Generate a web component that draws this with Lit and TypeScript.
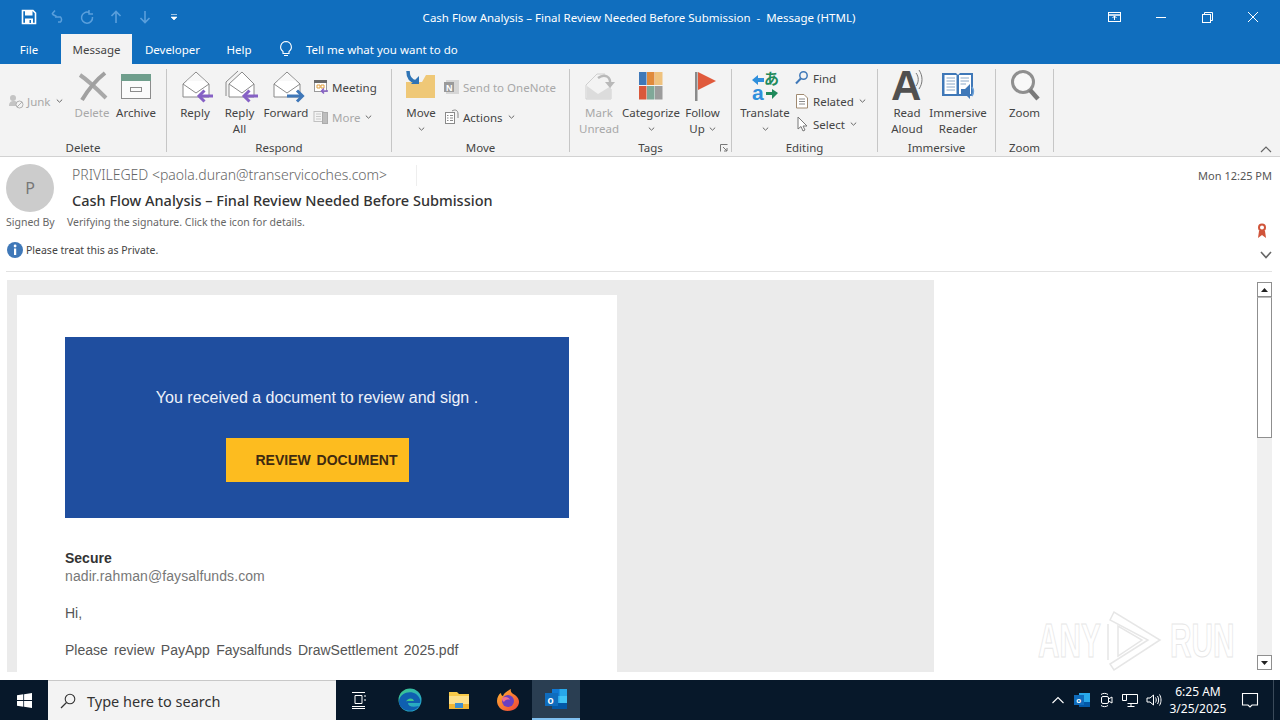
import { LitElement, html, css, svg, nothing } from "lit";
import { customElement } from "lit/decorators.js";

const big = (d: unknown) => html`<svg class="bigico" viewBox="0 0 32 32">${d}</svg>`;
const sm = (d: unknown) => html`<svg class="smico" viewBox="0 0 16 16">${d}</svg>`;
const tb = (d: unknown) => html`<svg class="tbico" viewBox="0 0 24 24">${d}</svg>`;

const chev = html`<svg class="chev" viewBox="0 0 7 4"><path d="M.8.6 3.5 3.2 6.2.6" fill="none" stroke="currentColor" stroke-width="1"/></svg>`;

const envelope = svg`<path d="M4 14 17 2 30 14V27H4Z" fill="#fff" stroke="#8a8a8a" stroke-width="1"/><path d="M4 14 17 23 30 14" fill="none" stroke="#8a8a8a"/><path d="M8 11 17 3 26 11" fill="#f8f8f8" stroke="none"/>`;

const icons = {
  del: big(svg`<path d="M4 5C13 11 22 20 30 28" stroke="#a8a8a8" stroke-width="4" fill="none"/><path d="M29 3C20 10 12 20 6 30" stroke="#a0a0a0" stroke-width="4" fill="none"/>`),
  archive: big(svg`<rect x="1.5" y="4.5" width="29" height="24" fill="#fbfbfb" stroke="#8c8c8c"/><rect x="1" y="4" width="30" height="7" fill="#6f9e8c"/><rect x="10.5" y="17.5" width="11" height="4" fill="none" stroke="#8c8c8c"/>`),
  reply: big(svg`${envelope}<path d="M34 26H20" stroke="#8661c5" stroke-width="3"/><path d="M25.500 20.500 20 26l5.500 5.500" fill="none" stroke="#8661c5" stroke-width="3"/>`),
  replyAll: big(svg`<path d="M2 26V12L14 1" fill="none" stroke="#8a8a8a"/><path d="M5 14 18 2 30 14V27H5Z" fill="#fff" stroke="#8a8a8a"/><path d="M5 14 18 23 30 14" fill="none" stroke="#8a8a8a"/><path d="M34 26H20" stroke="#8661c5" stroke-width="3"/><path d="M25.500 20.500 20 26l5.500 5.500" fill="none" stroke="#8661c5" stroke-width="3"/>`),
  forward: big(svg`${envelope}<path d="M17 26H31" stroke="#3f77b8" stroke-width="3"/><path d="M27 20.500 32.500 26 27 31.500" fill="none" stroke="#3f77b8" stroke-width="3"/>`),
  move: big(svg`<path d="M1 28V12H17L21 5H30V28Z" fill="#efc877"/><path d="M3 1C3 8 6 11 11 12" fill="none" stroke="#2f74b5" stroke-width="3.500"/><path d="M6 14H14V6Z" fill="#2f74b5"/>`),
  unread: big(svg`<path d="M3 15 14 4 22 4M3 15V29H28V19" fill="none" stroke="#cfcfcf"/><path d="M4 16 15 24 28 16V29H4Z" fill="#dcdcdc"/><path d="M15 8C22 3 28 7 27 14" fill="none" stroke="#b9b9b9" stroke-width="2.500"/><path d="M22 12H32L27 18Z" fill="#b9b9b9"/>`),
  cat: big(svg`<rect x="4" y="2" width="7.500" height="13" fill="#3f78b8"/><rect x="12" y="2" width="7.500" height="13" fill="#e08a3c"/><rect x="20" y="2" width="7.500" height="13" fill="#efc27e"/><rect x="4" y="16" width="7.500" height="13.500" fill="#d9583b"/><rect x="12" y="16" width="7.500" height="13.500" fill="#7fa898"/><rect x="20" y="16" width="7.500" height="13.500" fill="#9c9c9c"/>`),
  flag: big(svg`<rect x="8" y="2" width="2.500" height="29" fill="#8a8a8a"/><path d="M11 2 29 11 11 20Z" fill="#e05a3c"/>`),
  translate: big(svg`<path d="M12 8H6V5L0 10 6 15V12H12Z" fill="#2f8fdc" transform="translate(3 0)"/><text class="gl-a" x="15" y="14">あ</text><text class="gl-b" x="3" y="30">a</text><path d="M18 20V23H24V27L30 21 24 17V20Z" fill="#1f8a5b" transform="translate(-1 2)"/>`),
  read: big(svg`<text class="gl-c" x="0" y="30">A</text><path d="M25 3C28 7 28 12 25 16" fill="none" stroke="#777"/><path d="M28 0C32 6 32 13 28 19" fill="none" stroke="#777"/>`),
  imm: big(svg`<path d="M0 3H14L16 5 18 3H31V26H0Z" fill="#3f78b8"/><rect x="2.500" y="5" width="12" height="19" fill="#fff"/><rect x="17" y="5" width="12" height="19" fill="#fff"/><path d="M4.500 8H13M4.500 11H13M4.500 14H13M4.500 17H13M4.500 20H13M18.500 8H27M18.500 11H27M18.500 14H24" stroke="#8aa8c8"/><path d="M19 19H23L28 14V29L23 24H19Z" fill="#3f78b8"/><path d="M30 17C32 20 32 23 30 26" fill="none" stroke="#6fa3d8" stroke-width="1.500"/>`),
  zoom: big(svg`<circle cx="14" cy="12" r="10.500" fill="#fff" fill-opacity=".4" stroke="#8f8f8f" stroke-width="3"/><path d="M21 20 29 29" stroke="#7a7a7a" stroke-width="4.500"/>`),
  junk: sm(svg`<circle cx="5" cy="5" r="3" fill="#c4c4c4"/><path d="M1 13C1 9 3 8 6 8S9 10 9 12L8 13Z" fill="#c4c4c4"/><circle cx="11.500" cy="11.500" r="3.500" fill="#f3f3f3" stroke="#b0b0b0"/><path d="M9 14 14 9" stroke="#b0b0b0"/>`),
  meeting: sm(svg`<rect x="1.500" y="2.500" width="12" height="10" fill="#fff" stroke="#9a9a9a"/><rect x="1" y="1" width="13" height="3" fill="#6a6a6a"/><path d="M4 6H7V9H4ZM8 6H11V9H8Z" fill="none" stroke="#e0a040"/><path d="M15 12H9M11 9.500 8.500 12 11 14.500" fill="none" stroke="#8661c5" stroke-width="1.500"/>`),
  more: sm(svg`<rect x="1" y="2.500" width="9" height="10" fill="none" stroke="#c0c0c0"/><path d="M3 5H8M3 7.500H8M3 10H8" stroke="#c8c8c8"/><rect x="9.500" y="3.500" width="5" height="11" fill="#bdbdbd" stroke="#ababab"/>`),
  onenote: sm(svg`<rect x="2" y="1" width="13" height="14" fill="#d6d6d6"/><rect x="0" y="3" width="10" height="10" fill="#9a9a9a"/><text class="gl-n" x="2" y="11.500">N</text>`),
  actions: sm(svg`<rect x="1.500" y="3.500" width="9" height="11" fill="#fff" stroke="#8a8a8a"/><path d="M3 6.500H4.500M6 6.500H9M3 9H4.500M6 9H9M3 11.500H4.500M6 11.500H9" stroke="#8a8a8a"/><path d="M8 2C11 0 14 1 14 5V9" fill="none" stroke="#8a8a8a"/>`),
  find: sm(svg`<circle cx="9.500" cy="5.500" r="3.700" fill="none" stroke="#3f78b8" stroke-width="1.500"/><path d="M6.800 8.500 2 13.500" stroke="#3f78b8" stroke-width="2"/>`),
  related: sm(svg`<path d="M2.500 1.500H10L13.500 5V15H2.500Z" fill="#fff" stroke="#a08a70"/><path d="M5 6H11M5 8.500H11M5 11H11" stroke="#8a8a8a"/>`),
  select: sm(svg`<path d="M4 1V13L7 10.500 9 15 11 14 9 10H13Z" fill="#fff" stroke="#777"/>`),
};

type Btn = { l: string[]; i: unknown; w: string; off?: boolean; ch?: boolean };

const bigBtn = (b: Btn) => html`<div class="big ${b.w} ${b.off ? "off" : ""}">
  <div class="ico">${b.i}</div>
  ${b.l.map((t) => html`<div class="lbl">${t}</div>`)}
  ${b.ch && b.l.length === 1 ? html`<div class="lbl chevrow">${chev}</div>` : nothing}
</div>`;

const small = (t: string, i: unknown, off = false, ch = false) => html`<div class="small ${off ? "off" : ""}">${i}<span>${t}</span>${ch ? chev : nothing}</div>`;

@customElement("app-root")
export class AppRoot extends LitElement {
  static styles = css`
    :host { display: block; width: 1280px; height: 720px; overflow: hidden; position: relative; background: #fff; font-family: "Noto Sans", "Open Sans", sans-serif; font-size: 11.5px; color: #444; }
    svg { display: block; overflow: visible; flex: none; }
    .titlebar { height: 34px; background: #106ebe; display: flex; align-items: center; color: #fff; position: relative; }
    .qat { display: flex; align-items: center; padding-left: 21px; }
    .qat svg { width: 16px; height: 16px; margin-right: 13px; }
    .title { position: absolute; left: 0; right: 2px; text-align: center; pointer-events: none; }
    .winbtns { margin-left: auto; display: flex; align-items: center; padding-right: 4px; position: relative; }
    .winbtns svg { width: 46px; height: 14px; }
    .tabs { height: 30px; background: #106ebe; display: flex; color: #fff; }
    .tab { display: flex; align-items: center; justify-content: center; }
    .t-file { width: 58px; }
    .t-msg { width: 71px; margin-left: 3px; background: #f3f3f3; color: #444; }
    .t-dev { width: 81px; }
    .t-help { width: 52px; }
    .tell { display: flex; align-items: center; margin-left: 13px; gap: 12px; }
    .tell svg { width: 16px; height: 18px; }
    .ribbon { height: 92px; background: #f3f3f3; border-bottom: 1px solid #d2d2d2; display: flex; align-items: flex-start; padding-top: 5px; box-sizing: content-box; height: 87px; position: relative; }
    .sep { width: 1px; height: 83px; background: #c6c6c6; flex: none; }
    .group { display: flex; flex-direction: column; height: 87px; flex: none; }
    .gbody { height: 71px; display: flex; }
    .glabel { height: 16px; line-height: 16px; text-align: center; position: relative; }
    .launch { position: absolute; right: 3px; top: 4px; width: 8px; height: 8px; }
    .g-delete { width: 166px; } .g-delete .gbody { padding-left: 8px; }
    .g-respond { width: 224px; } .g-respond .gbody { padding-left: 5px; }
    .g-move { width: 177px; } .g-move .gbody { padding-left: 8px; }
    .g-tags { width: 161px; } .g-tags .gbody { padding-left: 6px; }
    .g-edit { width: 145px; } .g-edit .gbody { padding-left: 8px; }
    .g-imm { width: 117px; } .g-imm .gbody { padding-left: 6px; }
    .g-zoom { width: 57px; } .g-zoom .gbody { justify-content: center; }
    .big { display: flex; flex-direction: column; align-items: center; flex: none; }
    .w40 { width: 40px; } .w42 { width: 42px; } .w43 { width: 43px; } .w45 { width: 45px; } .w46 { width: 46px; } .w48 { width: 48px; } .w50 { width: 50px; } .w56 { width: 56px; } .w58 { width: 58px; }
    .ico { height: 35px; padding-top: 1px; box-sizing: content-box; height: 35px; }
    .bigico { width: 32px; height: 32px; }
    .lbl { height: 16px; line-height: 16px; white-space: nowrap; display: flex; align-items: center; justify-content: center; gap: 4px; }
    .chev { width: 7px; height: 4px; color: #666; }
    .off { color: #a8a8a8; }
    .col { display: flex; flex-direction: column; }
    .col-a { padding: 9px 0 0 2px; gap: 12px; }
    .col-b { padding: 0 0 0 4px; gap: 5px; }
    .col-j { padding-top: 23px; width: 60px; }
    .small { height: 18px; display: flex; align-items: center; gap: 3px; white-space: nowrap; }
    .small .chev { margin-left: 2px; }
    .smico { width: 16px; height: 16px; }
    .collapse { position: absolute; right: 8px; bottom: 3px; width: 12px; height: 7px; }
    .head { position: relative; height: 115px; box-sizing: border-box; padding: 7px 8px 0 6px; }
    .h1 { display: flex; }
    .avatar { width: 48px; height: 48px; border-radius: 50%; background: #cccccc; color: #777; display: flex; align-items: center; justify-content: center; font-size: 16px; flex: none; }
    .who { margin-left: 18px; }
    .from { font-size: 14px; line-height: 20px; margin-top: 1px; color: #666; font-weight: 300; width: 344px; border-right: 1px solid #eee; height: 21px; }
    .subject { font-size: 14.5px; line-height: 20px; margin-top: 4px; font-weight: 500; color: #333; white-space: nowrap; }
    .date { margin-left: auto; font-size: 11px; line-height: 16px; margin-top: 4px; color: #555; }
    .h2, .h3 { display: flex; align-items: center; font-size: 10.5px; color: #666; height: 16px; }
    .h2 { margin-top: 2px; }
    .signed { width: 61px; }
    .h3 { margin-top: 12px; color: #444; }
    .h3 svg.info { width: 16px; height: 16px; margin: 0 3px 0 1px; }
    .medal { margin-left: auto; width: 10px; height: 16px; margin-top: 18px; margin-right: 5px; }
    .more-h { margin-left: auto; width: 12px; height: 8px; margin-top: 9px; }
    .rule { height: 1px; background: #e2e2e2; margin-top: 13px; }
    .content { display: flex; height: 408px; position: relative; }
    .view { margin: 8px 0 8px 7px; width: 927px; height: 392px; background: #ebebeb; overflow: hidden; padding: 15px 0 0 10px; box-sizing: border-box; }
    .card { width: 600px; height: 500px; background: #fff; padding: 42px 48px 0; box-sizing: border-box; font-family: "Liberation Sans", Arial, sans-serif; font-size: 14px; color: #555; font-weight: 300; }
    .hero { height: 181px; background: #1f4e9f; color: #fff; display: flex; flex-direction: column; align-items: center; }
    .hero p { margin: 52px 0 0; font-size: 16px; line-height: 18px; color: #eef2fa; white-space: nowrap; }
    .cta { margin-top: 31px; width: 183px; height: 44px; background: #fdbc1f; color: #3f2a10; font-weight: 700; font-size: 14px; line-height: 44px; padding-left: 30px; box-sizing: border-box; white-space: nowrap; overflow: hidden; word-spacing: 2px; }
    .sec { margin-top: 31px; line-height: 18px; font-weight: 700; color: #333; }
    .addr { line-height: 18px; color: #777; letter-spacing: .1px; }
    .hi { margin-top: 19px; line-height: 18px; }
    .file { margin-top: 19px; line-height: 18px; word-spacing: 2.4px; }
    .scroll { position: absolute; right: 8px; top: 10px; width: 15px; height: 388px; background: #f0f0f0; display: flex; flex-direction: column; justify-content: space-between; box-sizing: border-box; }
    .sb { height: 15px; border: 1px solid #8f8f8f; background: #fff; display: flex; align-items: center; justify-content: center; box-sizing: border-box; flex: none; }
    .sb svg { width: 7px; height: 4px; }
    .thumb { position: absolute; top: 15px; left: 0; right: 0; height: 141px; background: #fff; border: 1px solid #8f8f8f; box-sizing: border-box; border-top-color: #bbb; }
    .wm { position: absolute; left: 1038px; top: 338px; width: 194px; height: 62px; pointer-events: none; }
    .wm span { position: absolute; top: 4px; font: 700 48px/54px "Liberation Sans", sans-serif; color: transparent; -webkit-text-stroke: 1px #e6e6e6; transform: scaleX(.62); transform-origin: left top; }
    .wm .a { left: 0; } .wm .b { left: 132px; }
    .wm svg { position: absolute; left: 66px; top: 0; width: 62px; height: 62px; }
    .taskbar { height: 40px; background: #07182a; display: flex; align-items: stretch; color: #fff; }
    .start { width: 48px; display: flex; align-items: center; justify-content: center; }
    .start svg { width: 15px; height: 15px; }
    .search { width: 288px; background: #f3f3f3; border-top: 1px solid #c8c8c8; box-sizing: border-box; display: flex; align-items: center; color: #333; font-size: 14.5px; }
    .search svg { width: 16px; height: 16px; margin: 0 11px 0 12px; }
    .tb { width: 49px; display: flex; align-items: center; justify-content: center; flex: none; }
    .tb-first { margin-left: 0; }
    .tbico { width: 24px; height: 24px; }
    .active { background: #2a3e52; border-bottom: 2px solid #80c0f0; box-sizing: border-box; width: 48px; }
    .tray { margin-left: auto; display: flex; align-items: center; }
    .tray .t { width: 24px; display: flex; justify-content: center; }
    .tray svg { width: 16px; height: 16px; }
    .clock { width: 62px; margin-left: 1px; text-align: center; font-size: 12px; line-height: 17px; }
    .note { width: 42px; margin-left: 0; display: flex; justify-content: center; }
    .note svg { width: 18px; height: 18px; }
    .desk { width: 7px; border-left: 1px solid #3a4a5a; margin-left: 2px; box-sizing: border-box; height: 40px; }
    .gl-a { font: 700 15px "Noto Sans CJK JP", sans-serif; fill: #1f8a5b; }
    .gl-b { font: 700 21px "Liberation Sans", sans-serif; fill: #2f8fdc; }
    .gl-c { font: 700 42px "Liberation Sans", sans-serif; fill: #505050; }
    .gl-n { font: 700 9px "Liberation Sans", sans-serif; fill: #fff; }
  `;

  render() {
    const dim = "#5a9fdc";
    return html`
      <div class="titlebar">
        <div class="qat">
          <svg viewBox="0 0 16 16"><path d="M1.500 1.500H12L14.500 4V14.500H1.500Z" fill="none" stroke="#fff" stroke-width="1.600"/><rect x="4" y="2" width="7.500" height="4.500" fill="#fff"/><rect x="4" y="9.500" width="8" height="5" fill="#fff"/><rect x="8.500" y="11" width="1.500" height="3" fill="#106ebe"/></svg>
          <svg viewBox="0 0 16 16"><path d="M5 9H10.500A3.500 3.500 0 0 1 10.500 14H8M2 6 5 2.500M2 6 6.500 8.500" fill="none" stroke="${dim}" stroke-width="1.500" transform="translate(0 -1)"/></svg>
          <svg viewBox="0 0 16 16"><path d="M10 3.500A5.500 5.500 0 1 0 13.500 8M10 1V5H14" fill="none" stroke="${dim}" stroke-width="1.500"/></svg>
          <svg viewBox="0 0 16 16"><path d="M8 14V3M3.500 7 8 2.500 12.500 7" fill="none" stroke="${dim}" stroke-width="1.600"/></svg>
          <svg viewBox="0 0 16 16"><path d="M8 2V13M3.500 9 8 13.500 12.500 9" fill="none" stroke="${dim}" stroke-width="1.600"/></svg>
          <svg viewBox="0 0 16 16"><path d="M5 5.500H11M5 8H11L8 11Z" fill="#fff" stroke="#fff" stroke-width=".6"/></svg>
        </div>
        <div class="title">Cash Flow Analysis – Final Review Needed Before Submission&nbsp; -&nbsp; Message (HTML)</div>
        <div class="winbtns">
          <svg viewBox="0 0 46 14"><rect x="16.500" y="2.500" width="12" height="9" fill="none" stroke="#fff"/><path d="M16 5H29" stroke="#fff" stroke-width="1.500"/><path d="M22.500 6V10M20.500 8 22.500 6 24.500 8" fill="none" stroke="#fff"/></svg>
          <svg viewBox="0 0 46 14"><path d="M18 7.500H28" stroke="#fff"/></svg>
          <svg viewBox="0 0 46 14"><rect x="18.500" y="4.500" width="8" height="8" fill="none" stroke="#fff"/><path d="M20.500 4.500V2.500H28.500V10.500H26.500" fill="none" stroke="#fff"/></svg>
          <svg viewBox="0 0 46 14"><path d="M18 2 28 12M28 2 18 12" stroke="#fff" fill="none"/></svg>
        </div>
      </div>
      <div class="tabs">
        <div class="tab t-file">File</div>
        <div class="tab t-msg">Message</div>
        <div class="tab t-dev">Developer</div>
        <div class="tab t-help">Help</div>
        <div class="tell">
          <svg viewBox="0 0 16 18"><path d="M8 1.500A5.500 5.500 0 0 0 5 11.500V13.500H11V11.500A5.500 5.500 0 0 0 8 1.500ZM6 15.500H10" fill="none" stroke="#fff" stroke-width="1.100"/></svg>
          <span>Tell me what you want to do</span>
        </div>
      </div>
      <div class="ribbon">
        <div class="group g-delete">
          <div class="gbody">
            <div class="col col-j">${small("Junk", icons.junk, true, true)}</div>
            ${bigBtn({ l: ["Delete"], i: icons.del, w: "w48", off: true })}
            ${bigBtn({ l: ["Archive"], i: icons.archive, w: "w40" })}
          </div>
          <div class="glabel">Delete</div>
        </div>
        <div class="sep"></div>
        <div class="group g-respond">
          <div class="gbody">
            ${bigBtn({ l: ["Reply"], i: icons.reply, w: "w46" })}
            ${bigBtn({ l: ["Reply", "All"], i: icons.replyAll, w: "w43" })}
            ${bigBtn({ l: ["Forward"], i: icons.forward, w: "w50" })}
            <div class="col col-a">
              ${small("Meeting", icons.meeting)}
              ${small("More", icons.more, true, true)}
            </div>
          </div>
          <div class="glabel">Respond</div>
        </div>
        <div class="sep"></div>
        <div class="group g-move">
          <div class="gbody">
            ${bigBtn({ l: ["Move"], i: icons.move, w: "w42", ch: true })}
            <div class="col col-a">
              ${small("Send to OneNote", icons.onenote, true)}
              ${small("Actions", icons.actions, false, true)}
            </div>
          </div>
          <div class="glabel">Move</div>
        </div>
        <div class="sep"></div>
        <div class="group g-tags">
          <div class="gbody">
            ${bigBtn({ l: ["Mark", "Unread"], i: icons.unread, w: "w46", off: true })}
            ${bigBtn({ l: ["Categorize"], i: icons.cat, w: "w58", ch: true })}
            <div class="big w45">
              <div class="ico">${icons.flag}</div>
              <div class="lbl">Follow</div>
              <div class="lbl">Up ${chev}</div>
            </div>
          </div>
          <div class="glabel">Tags
            <svg class="launch" viewBox="0 0 8 8"><path d="M.5 7.500V.5H7.500M3 3 7 7M7 4V7H4" fill="none" stroke="#777"/></svg>
          </div>
        </div>
        <div class="sep"></div>
        <div class="group g-edit">
          <div class="gbody">
            ${bigBtn({ l: ["Translate"], i: icons.translate, w: "w50", ch: true })}
            <div class="col col-b">
              ${small("Find", icons.find)}
              ${small("Related", icons.related, false, true)}
              ${small("Select", icons.select, false, true)}
            </div>
          </div>
          <div class="glabel">Editing</div>
        </div>
        <div class="sep"></div>
        <div class="group g-imm">
          <div class="gbody">
            ${bigBtn({ l: ["Read", "Aloud"], i: icons.read, w: "w46" })}
            ${bigBtn({ l: ["Immersive", "Reader"], i: icons.imm, w: "w56" })}
          </div>
          <div class="glabel">Immersive</div>
        </div>
        <div class="sep"></div>
        <div class="group g-zoom">
          <div class="gbody">${bigBtn({ l: ["Zoom"], i: icons.zoom, w: "w46" })}</div>
          <div class="glabel">Zoom</div>
        </div>
        <div class="sep"></div>
        <svg class="collapse" viewBox="0 0 12 7"><path d="M1 6 6 1 11 6" fill="none" stroke="#666" stroke-width="1.200"/></svg>
      </div>
      <div class="head">
        <div class="h1">
          <div class="avatar">P</div>
          <div class="who">
            <div class="from">PRIVILEGED &lt;paola.duran@transervicoches.com&gt;</div>
            <div class="subject">Cash Flow Analysis – Final Review Needed Before Submission</div>
          </div>
          <div class="date">Mon 12:25 PM</div>
        </div>
        <div class="h2">
          <span class="signed">Signed By</span><span>Verifying the signature. Click the icon for details.</span>
          <svg class="medal" viewBox="0 0 10 16"><circle cx="5" cy="4.500" r="3" fill="#fff" stroke="#d0543a" stroke-width="2"/><path d="M2 8H8L9 15 5 12 1 15Z" fill="#d0543a"/></svg>
        </div>
        <div class="h3">
          <svg class="info" viewBox="0 0 16 16"><circle cx="8" cy="8" r="8" fill="#3f78b8"/><rect x="7" y="6.500" width="2.200" height="6.500" fill="#fff"/><circle cx="8.100" cy="4" r="1.400" fill="#fff"/></svg>
          <span>Please treat this as Private.</span>
          <svg class="more-h" viewBox="0 0 12 8"><path d="M1 1 6 6.500 11 1" fill="none" stroke="#666" stroke-width="1.600"/></svg>
        </div>
        <div class="rule"></div>
      </div>
      <div class="content">
        <div class="view">
          <div class="card">
            <div class="hero">
              <p>You received a document to review and sign .</p>
              <div class="cta">REVIEW DOCUMENT</div>
            </div>
            <div class="sec">Secure</div>
            <div class="addr">nadir.rahman@faysalfunds.com</div>
            <div class="hi">Hi,</div>
            <div class="file">Please review PayApp Faysalfunds DrawSettlement 2025.pdf</div>
          </div>
        </div>
        <div class="scroll">
          <div class="sb"><svg viewBox="0 0 7 4"><path d="M0 4 3.500 0 7 4Z" fill="#222"/></svg></div>
          <div class="thumb"></div>
          <div class="sb"><svg viewBox="0 0 7 4"><path d="M0 0 3.500 4 7 0Z" fill="#222"/></svg></div>
        </div>
        <div class="wm">
          <span class="a">ANY</span>
          <svg viewBox="0 0 62 62"><path d="M6 10 10 2 56 30 10 60 6 54 44 30Z" fill="none" stroke="#e6e6e6" stroke-width="1.500"/><path d="M14 16V46L38 30Z" fill="none" stroke="#e6e6e6" stroke-width="1.500"/><path d="M4 14V50" stroke="#e6e6e6" stroke-width="1.500"/></svg>
          <span class="b">RUN</span>
        </div>
      </div>
      <div class="taskbar">
        <div class="start"><svg viewBox="0 0 15 15"><path d="M0 2.200 6.300 1.300V7.100H0ZM7.100 1.200 15 0V7.100H7.100ZM0 7.900H6.300V13.700L0 12.800ZM7.100 7.900H15V15L7.100 13.800Z" fill="#fff"/></svg></div>
        <div class="search">
          <svg viewBox="0 0 16 16"><circle cx="10" cy="6" r="4.800" fill="none" stroke="#333" stroke-width="1.100"/><path d="M6.500 9.500 1 15" stroke="#333" stroke-width="1.200"/></svg>
          <span>Type here to search</span>
        </div>
        <div class="tb">
          <svg class="tbico" viewBox="0 0 24 24"><path d="M5.500 4.500H18.500M8.500 7.500H15.500V15.500H8.500ZM5.500 18.500H18.500M5.500 20.500H18.500M18.500 7V9M18.500 11V13" fill="none" stroke="#fff" transform="translate(-2.500 0)"/></svg>
        </div>
        <div class="tb">
          ${tb(svg`<defs><linearGradient id="e1" x1="0" y1="0" x2="1" y2="1"><stop offset="0" stop-color="#3ec88a"/><stop offset="1" stop-color="#1f9fd8"/></linearGradient></defs><circle cx="12" cy="12" r="11.500" fill="url(#e1)"/><path d="M1 13C2 5 12 2 18 6 22 9 23 13 22 15H10C10 18 14 20 21 18 17 24 8 24 4 20 1 17 1 15 1 13Z" fill="#0f5fb0"/><path d="M8 14C9 10 15 9 16 13H8Z" fill="#3ec88a"/>`)}
        </div>
        <div class="tb">
          ${tb(svg`<path d="M2 4H10L12 6H22V21H2Z" fill="#f7c948"/><rect x="2" y="8" width="20" height="13" fill="#fde08a"/><rect x="2" y="16" width="20" height="5" fill="#f2b632"/><rect x="8" y="15" width="8" height="5" fill="#3f8fcf"/>`)}
        </div>
        <div class="tb">
          ${tb(svg`<defs><linearGradient id="f1" x1="0" y1="0" x2="1" y2="1"><stop offset="0" stop-color="#ffb52e"/><stop offset="1" stop-color="#f0413a"/></linearGradient></defs><path d="M12 23C5 23 1 18 1 13 1 9 3 6 5 5 5 7 6 8 7 8 8 5 11 3 15 1 14 4 16 5 19 7 22 9 23 12 23 14 23 19 18 23 12 23Z" fill="url(#f1)"/><circle cx="12" cy="13" r="6" fill="#6a3fc0"/><path d="M6 10C9 8 13 9 14 12 11 11 9 12 8 14 6 13 6 11 6 10Z" fill="#f36f8e"/>`)}
        </div>
        <div class="tb active">
          ${tb(svg`<rect x="8" y="2" width="15" height="20" fill="#28a8ea"/><rect x="8" y="2" width="7.500" height="7" fill="#0f78d4"/><rect x="15.500" y="9" width="7.500" height="7" fill="#50d9ff" fill-opacity=".6"/><rect x="8" y="16" width="15" height="6" fill="#0358a7"/><rect x="1" y="6" width="13" height="13" fill="#0f6cbd"/><text x="3.500" y="16.500" style="font:700 10px 'Liberation Sans',sans-serif;fill:#fff">o</text>`)}
        </div>
        <div class="tray">
          <div class="t"><svg viewBox="0 0 16 16"><path d="M2.500 11 8 5.500 13.500 11" fill="none" stroke="#fff" stroke-width="1.100"/></svg></div>
          <div class="t"><svg viewBox="0 0 16 16"><rect x="5" y="1" width="11" height="14" fill="#28a8ea"/><rect x="5" y="10" width="11" height="5" fill="#0358a7"/><rect x="0" y="3" width="10" height="10" fill="#0f6cbd"/><text x="2.200" y="11" style="font:700 8px 'Liberation Sans',sans-serif;fill:#fff">o</text></svg></div>
          <div class="t"><svg viewBox="0 0 16 16"><rect x="3.500" y="4.500" width="7" height="7" rx="1.500" fill="none" stroke="#fff"/><path d="M10.500 7 14 5V11L10.500 9M3 2.500C5 1 8 1 10 2.500M3 13.500C5 15 8 15 10 13.500" fill="none" stroke="#fff"/></svg></div>
          <div class="t"><svg viewBox="0 0 16 16"><path d="M.5 2.500H15.500V11.500H5.500M4.500 2.500V8.500H.5V2.500ZM9 11.500V14M5.500 14.500H12.500" fill="none" stroke="#fff"/></svg></div>
          <div class="t"><svg viewBox="0 0 16 16"><path d="M1 6H4L7.500 3V13L4 10H1ZM9.500 5.500C10.500 7 10.500 9 9.500 10.500M11.500 4C13 6.500 13 9.500 11.500 12M13.500 2.500C15.500 6 15.500 10 13.500 13.500" fill="none" stroke="#fff"/></svg></div>
          <div class="clock"><div>6:25 AM</div><div>3/25/2025</div></div>
          <div class="note"><svg viewBox="0 0 18 18"><path d="M1.500 2.500H16.500V14H11L9 16 7 14H1.500Z" fill="none" stroke="#fff" stroke-width="1.100"/></svg></div>
          <div class="desk"></div>
        </div>
      </div>
    `;
  }
}
